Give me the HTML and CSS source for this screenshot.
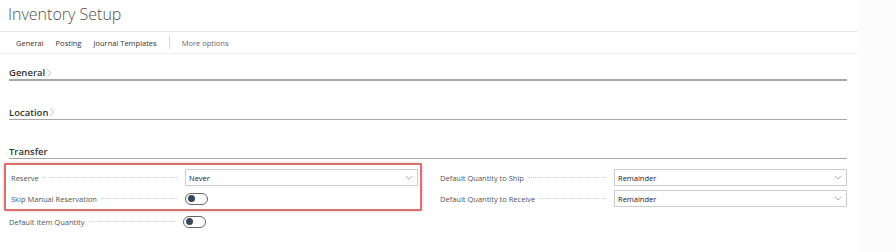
FILE: index.html
```html
<!DOCTYPE html>
<html lang="en">
<head>
  <meta charset="UTF-8" />
  <title>Inventory Setup</title>
  <link rel="stylesheet" href="styles.css">
</head>
<body>
  <div class="page">
    <h1 class="title">Inventory Setup</h1>

    <nav class="actions">
      <span class="action">General</span>
      <span class="action">Posting</span>
      <span class="action">Journal Templates</span>
      <span class="sep"></span>
      <span class="action more">More options</span>
    </nav>

    <!-- collapsed groups -->
    <section class="group">
      <h2 class="group-head thick">General<svg class="chev" viewBox="0 0 5 10"><path d="M0.5 0.5l4 4.5-4 4.5" /></svg></h2>
    </section>
    <section class="group">
      <h2 class="group-head">Location<svg class="chev" viewBox="0 0 5 10"><path d="M0.5 0.5l4 4.5-4 4.5" /></svg></h2>
    </section>

    <!-- Transfer -->
    <section class="group">
      <h2 class="group-head">Transfer</h2>
      <div class="fields">
        <div class="column">
          <div class="highlight">
            <div class="field">
              <span class="label">Reserve</span>
              <div class="select">Never<svg class="caret" viewBox="0 0 10 6"><path d="M1 1l4 4 4-4" /></svg></div>
            </div>
            <div class="field">
              <span class="label">Skip Manual Reservation</span>
              <span class="toggle"><span class="knob"></span></span>
            </div>
          </div>
          <div class="field">
            <span class="label">Default Item Quantity</span>
            <span class="toggle"><span class="knob"></span></span>
          </div>
        </div>
        <div class="column right">
          <div class="field">
            <span class="label">Default Quantity to Ship</span>
            <div class="select">Remainder<svg class="caret" viewBox="0 0 10 6"><path d="M1 1l4 4 4-4" /></svg></div>
          </div>
          <div class="field">
            <span class="label">Default Quantity to Receive</span>
            <div class="select">Remainder<svg class="caret" viewBox="0 0 10 6"><path d="M1 1l4 4 4-4" /></svg></div>
          </div>
        </div>
      </div>
    </section>
  </div>
</body>
</html>
```

FILE: styles.css
```css
body {
  margin: 0;
  background: #fcfcfc;
  font-family: "Segoe UI", "Open Sans", "Noto Sans", sans-serif;
  color: #333;
}

.page {
  width: 858px;
  height: 252px;
  background: #fff;
  overflow: hidden;
}

.title {
  margin: 0;
  padding: 1px 0 0 8px;
  height: 30px;
  font-size: 16px;
  font-weight: 300;
  color: #505050;
  line-height: 26px;
}

.actions {
  display: flex;
  align-items: center;
  height: 21px;
  border-top: 1px solid #e6e6e6;
  border-bottom: 1px solid #ececec;
  padding-left: 16px;
  font-size: 7.5px;
  color: #333;
}

.action {
  margin-right: 12px;
}

.sep {
  width: 1px;
  height: 13px;
  background: #d8d8d8;
  margin-right: 12px;
}

.more {
  color: #666;
}

.group {
  padding: 0 11px 0 9px;
}

.group-head {
  display: flex;
  align-items: center;
  margin: 0 0 12px 0;
  padding-top: 12px;
  height: 14px;
  font-size: 9.5px;
  font-weight: 600;
  color: #333;
  border-bottom: 1px solid #a6a6a6;
}

.group-head.thick {
  border-bottom: 2px solid #a6a6a6;
  height: 13px;
}

.chev {
  width: 4px;
  height: 8px;
  margin-left: 2px;
  fill: none;
  stroke: #999;
  stroke-width: 0.8;
}

.fields {
  display: grid;
  grid-template-columns: 407px 407px;
  column-gap: 24px;
  margin-top: -8px;
}

.column.right {
  padding-top: 4px;
}

.highlight {
  margin: 0 -6px 0 -5px;
  padding: 2px 6px 0 5px;
  border: 2px solid #dc6e6e;
  border-radius: 1px;
  box-shadow: 0 0 3px rgba(200, 80, 80, 0.35);
}

.field {
  display: grid;
  grid-template-columns: 174px 233px;
  align-items: center;
  height: 21px;
}

.label {
  font-size: 7.5px;
  color: #555;
  white-space: nowrap;
  overflow: hidden;
  display: flex;
  align-items: center;
}

.label::after {
  content: "";
  flex: 1;
  margin: 0 8px 0 4px;
  border-bottom: 1px dotted #cfcfcf;
  height: 0;
}

.select {
  display: flex;
  align-items: center;
  justify-content: space-between;
  box-sizing: border-box;
  height: 17px;
  padding: 0 4px 0 3px;
  border: 1px solid #cdcdcd;
  background: #fff;
  font-size: 7.5px;
  color: #222;
}

.caret {
  width: 8px;
  height: 5px;
  fill: none;
  stroke: #999;
  stroke-width: 1;
}

.toggle {
  display: flex;
  align-items: center;
  box-sizing: border-box;
  width: 23px;
  height: 12px;
  border: 1px solid #666;
  border-radius: 6px;
  padding-left: 2px;
}

.knob {
  width: 7px;
  height: 7px;
  border-radius: 50%;
  background: #3c4456;
}
```
